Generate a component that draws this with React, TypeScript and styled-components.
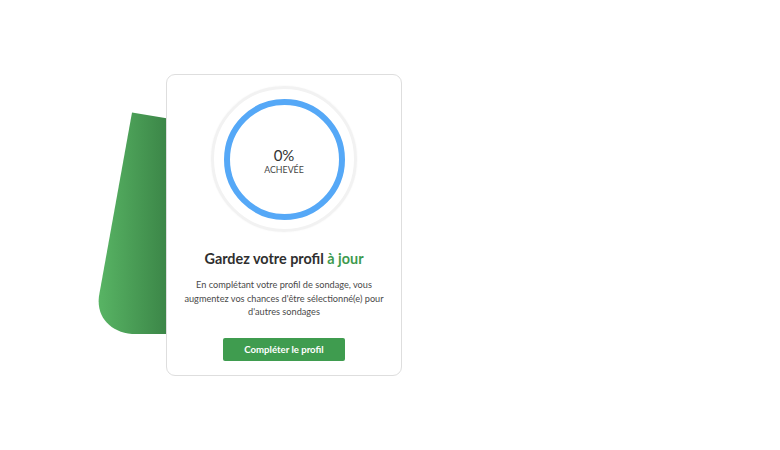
import * as React from "react";
import styled, { createGlobalStyle } from "styled-components";

const GlobalStyle = createGlobalStyle`
  html, body {
    margin: 0;
    padding: 0;
    background: #ffffff;
    font-family: Lato, "Open Sans", sans-serif;
  }
`;

const Page = styled.div`
  width: 780px;
  height: 450px;
  padding: 74px 0 0 166px;
  box-sizing: border-box;
`;

const Stage = styled.div`
  position: relative;
  width: 236px;
`;

// green decoration peeking out behind the card
const Ribbon = styled.svg`
  position: absolute;
  left: -70px;
  top: 36px;
  width: 72px;
  height: 226px;
  z-index: 0;
`;

const Card = styled.div`
  position: relative;
  z-index: 1;
  width: 236px;
  height: 302px;
  box-sizing: border-box;
  background: #ffffff;
  border: 1px solid #dedede;
  border-radius: 9px;
  display: flex;
  flex-direction: column;
  align-items: center;
  padding-top: 11px;
`;

const Gauge = styled.div`
  width: 146px;
  height: 146px;
  border-radius: 50%;
  box-sizing: border-box;
  border: 3px solid #f2f2f2;
  box-shadow: 0 0 2px rgba(0, 0, 0, 0.05);
  display: flex;
  align-items: center;
  justify-content: center;
`;

const Ring = styled.div`
  width: 121px;
  height: 121px;
  border-radius: 50%;
  box-sizing: border-box;
  border: 6px solid #55a8f7;
  display: flex;
  flex-direction: column;
  align-items: center;
  justify-content: center;
  padding-top: 4px;
`;

const Percent = styled.div`
  font-size: 15px;
  line-height: 16px;
  color: #333;
`;

const Done = styled.div`
  font-size: 8.8px;
  line-height: 11px;
  margin-top: 1px;
  color: #444;
  text-transform: uppercase;
`;

const Title = styled.h2`
  margin: 18px 0 0;
  font-size: 14.4px;
  line-height: 18px;
  font-weight: 700;
  color: #2f2f2f;
`;

const Accent = styled.span`
  color: #3e9a4e;
`;

const Text = styled.p`
  margin: 10px 0 0;
  width: 214px;
  text-align: center;
  font-size: 9.2px;
  line-height: 13.5px;
  color: #4a4a4a;
`;

const Button = styled.button`
  margin-top: 19px;
  width: 122px;
  height: 23px;
  border: none;
  border-radius: 2px;
  background: #3f9c4f;
  color: #ffffff;
  font-family: Lato, sans-serif;
  font-weight: 700;
  font-size: 9.6px;
  padding: 0;
  cursor: pointer;
`;

export default function App() {
  return (
    <Page>
      <GlobalStyle />
      <Stage>
        <Ribbon viewBox="96 110 72 226">
          <defs>
            <linearGradient id="rib" x1="0" y1="0" x2="1" y2="0">
              <stop offset="0" stopColor="#58b464" />
              <stop offset="1" stopColor="#3b8547" />
            </linearGradient>
          </defs>
          <path
            d="M132,112.5 L168,118.5 L168,334 L136,334 C112,334 96,318 99,296 Z"
            fill="url(#rib)"
          />
        </Ribbon>
        <Card>
          <Gauge>
            <Ring>
              <Percent>0%</Percent>
              <Done>Achevée</Done>
            </Ring>
          </Gauge>
          <Title>
            Gardez votre profil <Accent>à jour</Accent>
          </Title>
          <Text>
            En complétant votre profil de sondage, vous augmentez vos chances d'être sélectionné(e) pour d'autres sondages
          </Text>
          <Button>Compléter le profil</Button>
        </Card>
      </Stage>
    </Page>
  );
}
